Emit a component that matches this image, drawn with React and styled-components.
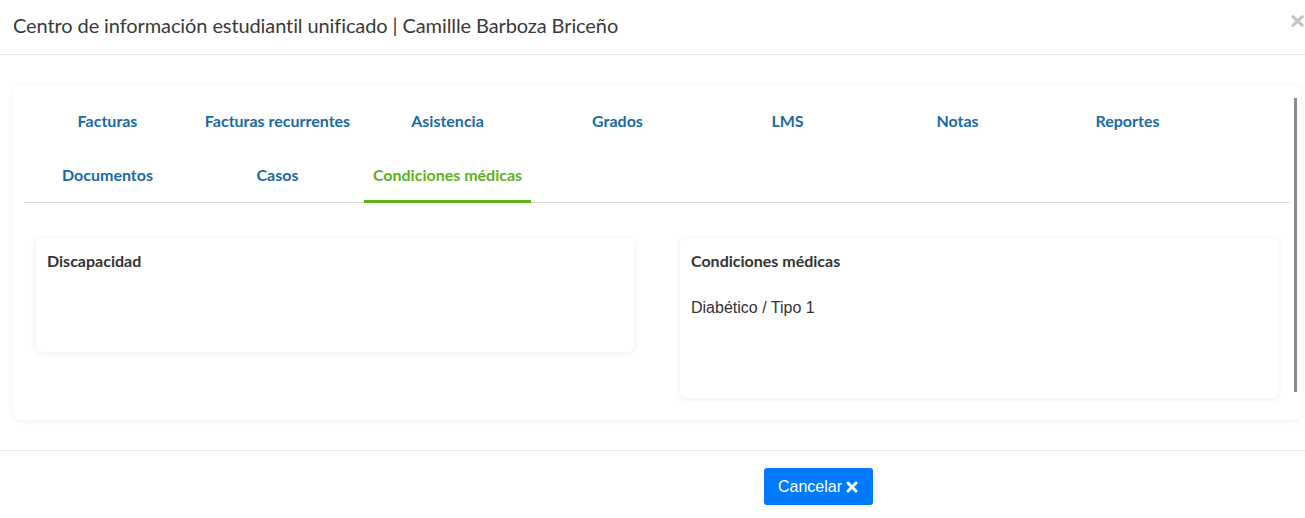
import React from "react";
import styled, { createGlobalStyle } from "styled-components";

const Global = createGlobalStyle`
  html, body { margin: 0; padding: 0; background: #fff; overflow: hidden; }
  body { font-family: "Liberation Sans", Arial, sans-serif; color: #333; }
  * { box-sizing: border-box; }
`;

const Page = styled.div`
  width: 1305px;
  height: 518px;
  display: flex;
  flex-direction: column;
  background: #fff;
`;

const Header = styled.div`
  height: 55px;
  display: flex;
  align-items: center;
  justify-content: space-between;
  padding-left: 13px;
  border-bottom: 1px solid #e9e9e9;
`;

const Title = styled.h4`
  margin: 0;
  margin-top: -5px;
  font-family: Lato, "Open Sans", sans-serif;
  font-weight: 400;
  font-size: 20px;
  color: #3a3a3a;
  letter-spacing: -0.1px;
`;

const CloseX = styled.span`
  width: 14px;
  height: 16px;
  margin-top: -12px;
  overflow: hidden;
  display: flex;
`;

const Body = styled.div`
  padding: 30px 4px 30px 13px;
  border-bottom: 1px solid #e9e9e9;
`;

const Card = styled.div`
  position: relative;
  background: #fff;
  border-radius: 8px;
  box-shadow: 0 1px 6px rgba(30, 40, 90, 0.07);
  padding: 9px 11px 22px 11px;
`;

const ScrollThumb = styled.div`
  position: absolute;
  right: 4px;
  top: 13px;
  width: 3px;
  height: 294px;
  background: #8a8a8a;
`;

const Tabs = styled.div`
  display: flex;
  flex-wrap: wrap;
  column-gap: 3px;
  border-bottom: 1px solid #dedede;
  width: 1266px;
`;

const Tab = styled.div`
  width: 167px;
  height: 55px;
  display: flex;
  align-items: center;
  justify-content: center;
  font-family: Lato, "Open Sans", sans-serif;
  font-weight: 700;
  font-size: 16px;
  color: ${(p) => (p.$active ? "#5cb31b" : "#1a6aa5")};
  border-bottom: 3px solid ${(p) => (p.$active ? "#5cb31b" : "transparent")};
  margin-bottom: -1px;
`;

const Panels = styled.div`
  display: grid;
  grid-template-columns: 598px 598px;
  column-gap: 46px;
  align-items: start;
  padding: 35px 12px 0 12px;
  width: 1266px;
`;

const Panel = styled.div`
  height: ${(p) => p.$h}px;
  background: #fff;
  border-radius: 6px;
  box-shadow: 0 1px 6px rgba(30, 40, 90, 0.09);
  padding: 13px 11px;
`;

const PanelTitle = styled.div`
  font-family: Lato, "Open Sans", sans-serif;
  font-weight: 700;
  font-size: 16px;
  line-height: 20px;
  color: #333;
`;

const PanelText = styled.div`
  margin-top: 27px;
  font-family: "Liberation Sans", Arial, sans-serif;
  font-size: 16px;
  line-height: 20px;
  color: #333;
`;

const Footer = styled.div`
  display: flex;
  justify-content: center;
  padding: 17px 0 0 331px;
`;

const Button = styled.button`
  width: 109px;
  height: 37px;
  border: none;
  border-radius: 3px;
  background: #007bff;
  color: #fff;
  font-family: "Liberation Sans", Arial, sans-serif;
  font-size: 16px;
  display: flex;
  align-items: center;
  justify-content: center;
  gap: 4px;
  padding: 0;
`;

const XIcon = ({ size = 12, color = "#fff" }) => (
  <svg width={size} height={size} viewBox="0 0 12 12">
    <path
      d="M2 2 L10 10 M10 2 L2 10"
      stroke={color}
      strokeWidth="3"
      strokeLinecap="round"
    />
  </svg>
);

const row1 = ["Facturas", "Facturas recurrentes", "Asistencia", "Grados", "LMS", "Notas", "Reportes"];
const row2 = ["Documentos", "Casos", "Condiciones médicas"];

export default function App() {
  return (
    <Page>
      <Global />
      <Header>
        <Title>Centro de información estudiantil unificado | Camillle Barboza Briceño</Title>
        <CloseX>
          <svg width="18" height="16" viewBox="0 0 18 16">
            <path d="M2.5 2.5 L14.5 13.5 M14.5 2.5 L2.5 13.5" stroke="#c4c4c4" strokeWidth="4" strokeLinecap="round" />
          </svg>
        </CloseX>
      </Header>
      <Body>
        <Card>
          <ScrollThumb />
          <Tabs>
            {row1.map((t) => (
              <Tab key={t}>{t}</Tab>
            ))}
            {row2.map((t) => (
              <Tab key={t} $active={t === "Condiciones médicas"}>
                {t}
              </Tab>
            ))}
          </Tabs>
          <Panels>
            <Panel $h={114}>
              <PanelTitle>Discapacidad</PanelTitle>
            </Panel>
            <Panel $h={160}>
              <PanelTitle>Condiciones médicas</PanelTitle>
              <PanelText>Diabético / Tipo 1</PanelText>
            </Panel>
          </Panels>
        </Card>
      </Body>
      <Footer>
        <Button>
          Cancelar <XIcon />
        </Button>
      </Footer>
    </Page>
  );
}
